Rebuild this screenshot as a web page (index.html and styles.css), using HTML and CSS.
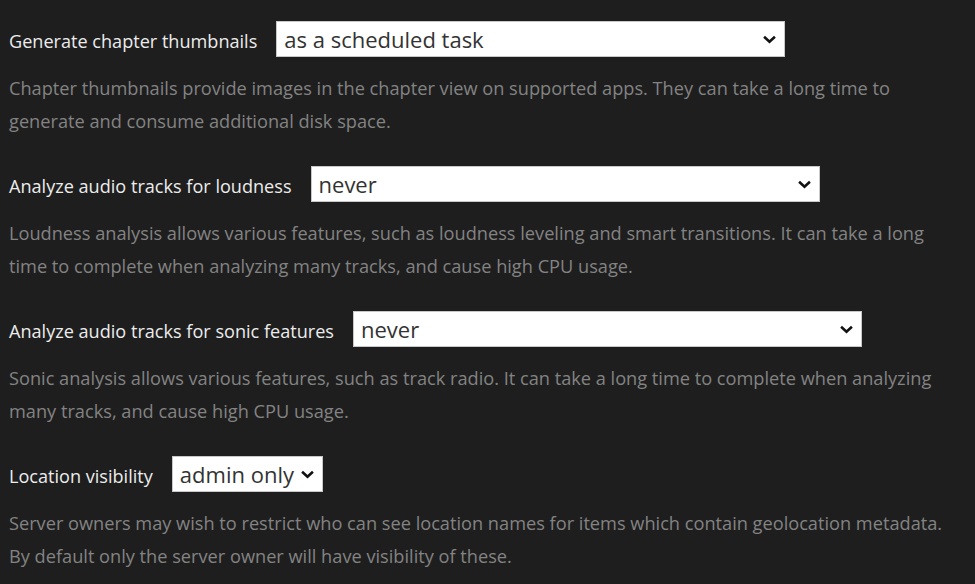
FILE: index.html
```html
<!DOCTYPE html>
<html lang="en">
<head>
<meta charset="utf-8">
<title>Settings</title>
<link rel="stylesheet" href="styles.css">
</head>
<body>
<main class="settings">
  <section class="setting">
    <div class="row">
      <label class="label">Generate chapter thumbnails</label>
      <div class="select wide"><span class="value">as a scheduled task</span><svg class="chev" viewBox="0 0 12 8"><path d="M1 1.5 L6 6 L11 1.5"/></svg></div>
    </div>
    <p class="desc">Chapter thumbnails provide images in the chapter view on supported apps. They can take a long time to<br>generate and consume additional disk space.</p>
  </section>
  <section class="setting">
    <div class="row">
      <label class="label">Analyze audio tracks for loudness</label>
      <div class="select wide"><span class="value">never</span><svg class="chev" viewBox="0 0 12 8"><path d="M1 1.5 L6 6 L11 1.5"/></svg></div>
    </div>
    <p class="desc">Loudness analysis allows various features, such as loudness leveling and smart transitions. It can take a long<br>time to complete when analyzing many tracks, and cause high CPU usage.</p>
  </section>
  <section class="setting">
    <div class="row">
      <label class="label">Analyze audio tracks for sonic features</label>
      <div class="select wide"><span class="value">never</span><svg class="chev" viewBox="0 0 12 8"><path d="M1 1.5 L6 6 L11 1.5"/></svg></div>
    </div>
    <p class="desc">Sonic analysis allows various features, such as track radio. It can take a long time to complete when analyzing<br>many tracks, and cause high CPU usage.</p>
  </section>
  <section class="setting">
    <div class="row">
      <label class="label">Location visibility</label>
      <div class="select narrow"><span class="value">admin only</span><svg class="chev" viewBox="0 0 12 8"><path d="M1 1.5 L6 6 L11 1.5"/></svg></div>
    </div>
    <p class="desc">Server owners may wish to restrict who can see location names for items which contain geolocation metadata.<br>By default only the server owner will have visibility of these.</p>
  </section>
</main>
</body>
</html>
```

FILE: styles.css
```css
html, body {
  margin: 0;
  padding: 0;
  background: #1e1e1e;
}
body {
  font-family: "Open Sans", "Noto Sans", sans-serif;
  color: #e6e6e6;
}
.settings {
  padding: 21px 0 0 9px;
}
.setting {
  margin: 0 0 28px 0;
}
.row {
  display: flex;
  align-items: center;
  gap: 19px;
  height: 36px;
}
.label {
  font-size: 18.1px;
  color: #ececec;
  padding-top: 4px;
}
.select {
  box-sizing: border-box;
  height: 36px;
  background: #ffffff;
  border: 1px solid #c8c8c8;
  display: flex;
  align-items: center;
  justify-content: space-between;
  padding: 0 8px 0 7px;
}
.select.wide { width: 509px; }
.select.narrow { width: 151px; }
.value {
  font-size: 22px;
  color: #333333;
}
.chev {
  flex: none;
  width: 13px;
  height: 9px;
  fill: none;
  stroke: #111111;
  stroke-width: 2.4;
  margin-left: 4px;
}
.desc {
  margin: 15px 0 0 0;
  font-size: 18.2px;
  line-height: 33px;
  color: #838383;
  white-space: nowrap;
}
```
